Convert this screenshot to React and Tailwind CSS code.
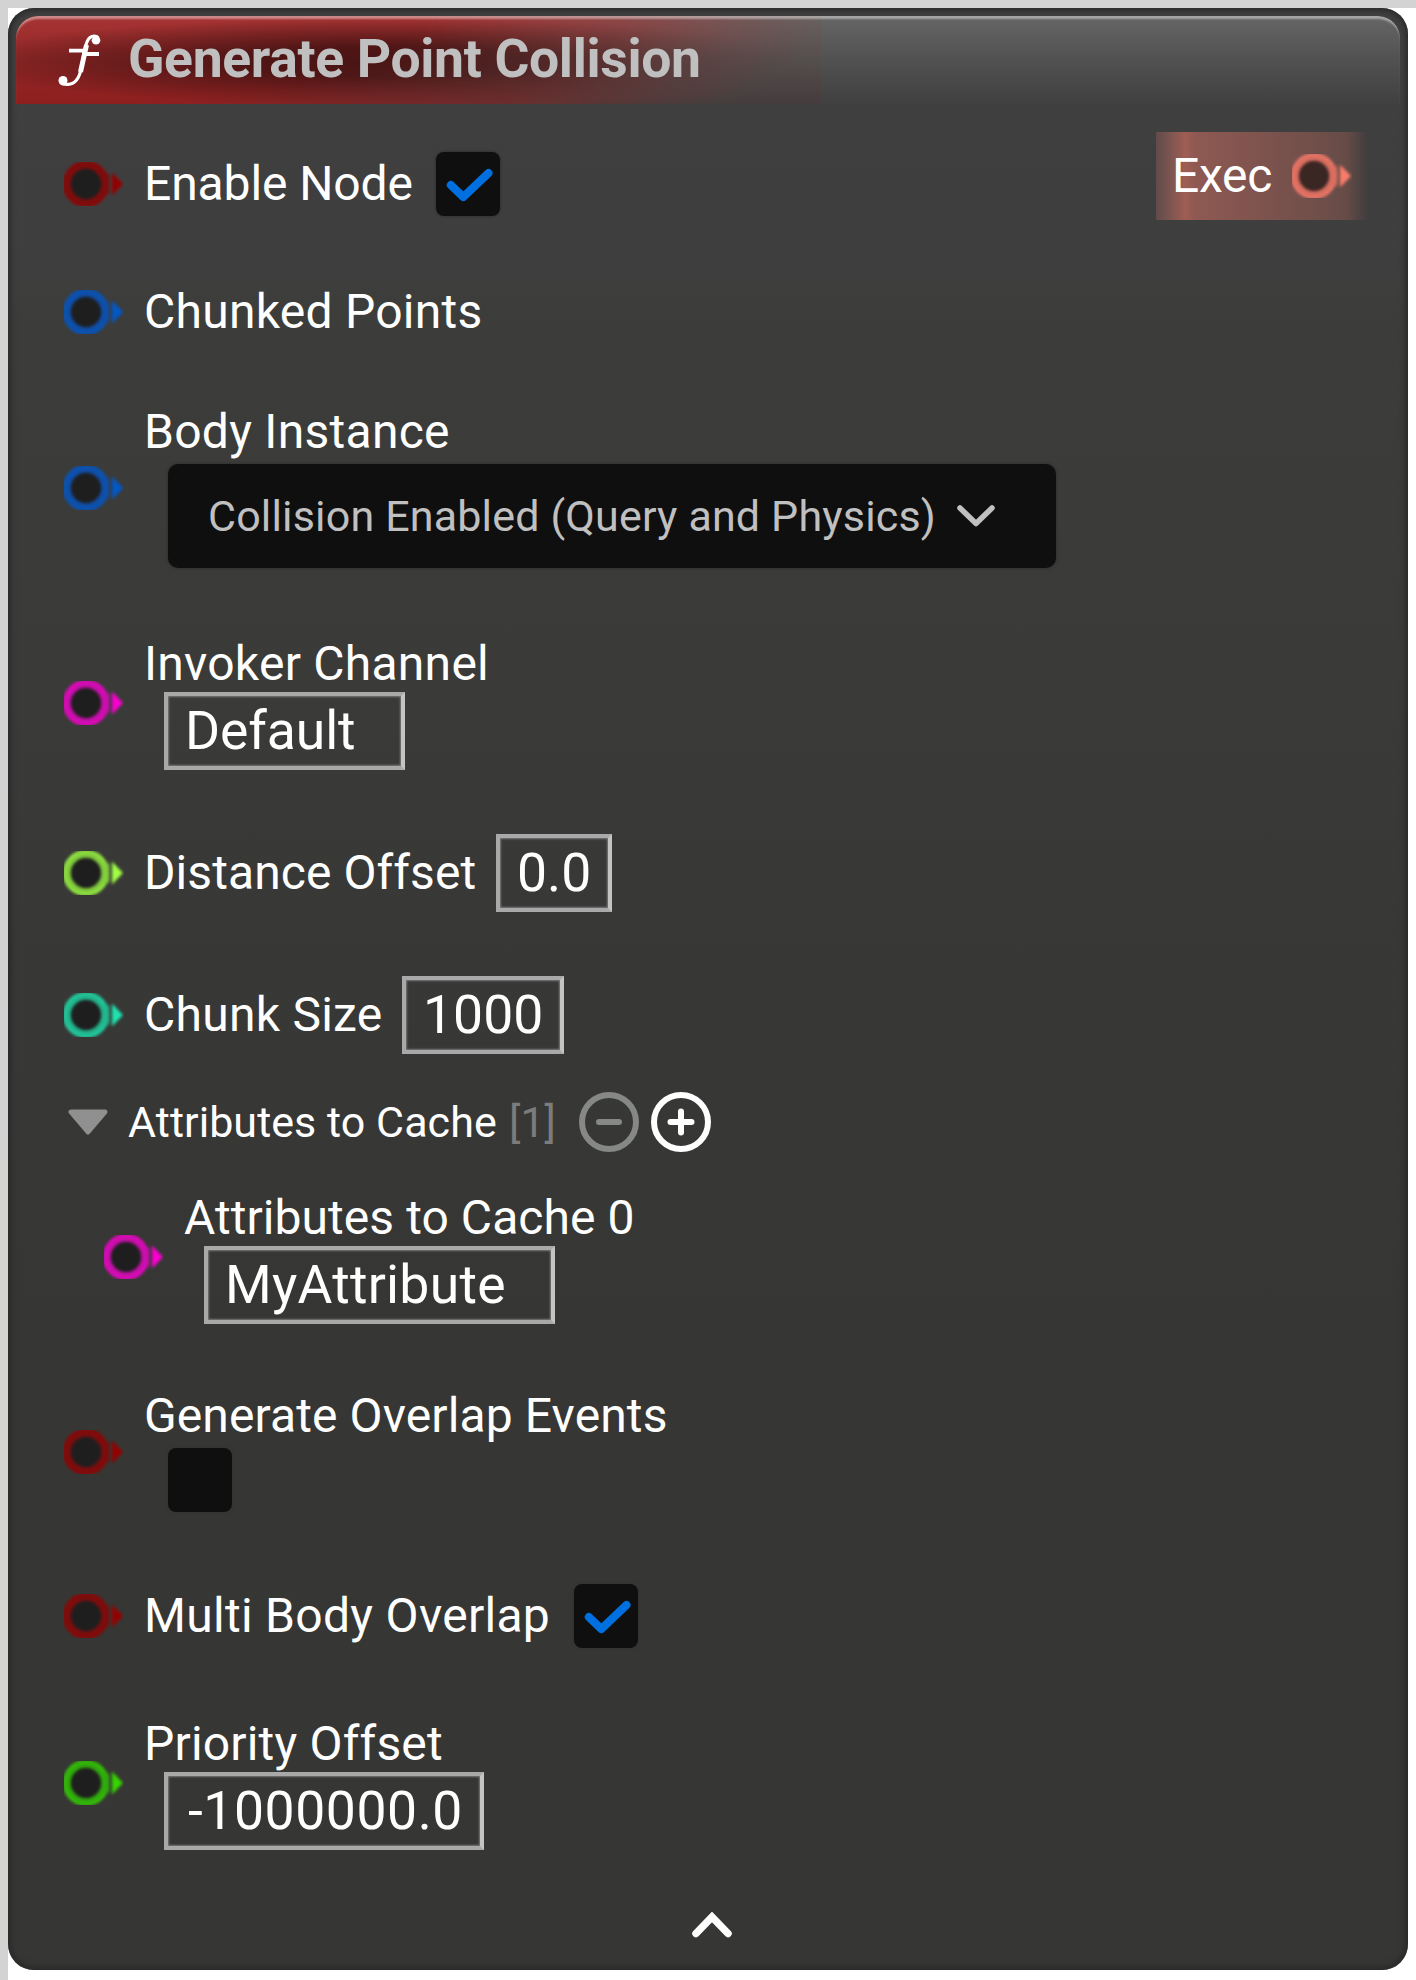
import React from "react";

function Pin({ color, ring, core = "#1e1e1e" }) {
  return (
    <svg width="60" height="44" viewBox="0 0 60 44" className="shrink-0 overflow-hidden">
      <g style={{ filter: "blur(1.4px)" }}>
        <circle cx="22" cy="22" r="19" fill={core} stroke={ring} strokeWidth="7.5" />
        <circle cx="22" cy="22" r="22" fill="none" stroke={color} strokeWidth="2" />
        <path d="M41 10 L45.500 13 V31 L41 34 Z" fill={ring} opacity="0.8" />
        <path d="M48 10.500 L59 22 L48 33.500 Z" fill={color} />
      </g>
    </svg>
  );
}

const PINS = {
  bool: ["#950000", "#7c0d0d"],
  struct: ["#0058cb", "#0f4fa8"],
  name: ["#fb00d0", "#c90fab"],
  float: ["#a1ff45", "#82cd3c"],
  int: ["#1fe3af", "#22b58d"],
  real: ["#35d400", "#30aa0c"],
};

function TypePin({ type }) {
  return <Pin color={PINS[type][0]} ring={PINS[type][1]} />;
}

function Label({ children, className = "" }) {
  return <div className={`h-14 text-[48px] leading-[56px] whitespace-nowrap text-white ${className}`}>{children}</div>;
}

function Row({ type, indent = "pl-12", children }) {
  return (
    <div className={`flex items-center gap-5 py-8 ${indent}`}>
      <TypePin type={type} />
      {children}
    </div>
  );
}

function Field({ className, children }) {
  return (
    <div
      className={`flex h-[78px] items-center border-4 border-[#a9a9a9] border-r-[#c4c4c4] text-[53.5px] leading-none whitespace-nowrap text-white shadow-[inset_0_0_2px_1px_#7a7a7a] ${className}`}
    >
      {children}
    </div>
  );
}

function Checkbox({ checked }) {
  return (
    <div className="flex size-16 items-center justify-center rounded-lg bg-[#0f0f0f] shadow-[0_0_2px_1px_#333333]">
      {checked && (
        <svg width="64" height="64" viewBox="0 0 64 64" fill="none">
          <path d="M14.800 33 L27.300 45 L52.500 21" stroke="#0070e0" strokeWidth="8" strokeLinecap="round" strokeLinejoin="round" />
        </svg>
      )}
    </div>
  );
}

function FunctionIcon() {
  return (
    <svg width="44" height="56" viewBox="0 0 44 56" className="shrink-0" fill="none">
      <path
        d="M40 5.500 C38 3.500 34.500 3.500 32 5.500 C29.500 7.500 28.300 11 27.500 15 L23 37 C21.500 45 18.500 52 10 52.300 C7 52.500 4 52 2.500 50.500"
        stroke="#fff"
        strokeWidth="3.200"
      />
      <path d="M28.500 13 L22.500 40" stroke="#fff" strokeWidth="5" />
      <circle cx="38" cy="8.300" r="4.300" fill="#fff" />
      <circle cx="5" cy="48.500" r="4.500" fill="#fff" />
      <path d="M11 18.700 H26 M24 22 H41" stroke="#fff" strokeWidth="3.800" />
    </svg>
  );
}

function Header() {
  return (
    <div className="relative h-[88px] overflow-hidden rounded-t-[22px] bg-linear-to-b from-[#666666] via-[#505150] to-[#404040]">
      <div className="absolute inset-y-0 left-0 w-[805px] bg-linear-to-b from-[#a83434] via-[#922626] to-[#8f1f1f] [mask-image:radial-gradient(805px_181px_at_0_0,#000_50%,rgba(0,0,0,0.62)_75%,rgba(0,0,0,0.25)_90%,rgba(0,0,0,0.07)_100%)]">
        <div className="size-full bg-[radial-gradient(430px_44px_at_370px_46px,#4a1414_0%,rgba(74,20,20,0.92)_35%,rgba(74,20,20,0.5)_65%,rgba(74,20,20,0)_100%)]" />
      </div>
      <div className="absolute inset-0 rounded-t-[22px] shadow-[inset_0_4px_2px_-1px_rgba(255,255,255,0.42)]" />
      <div className="relative flex h-full items-center pl-[42px]">
        <FunctionIcon />
        <h1 className="mb-0.5 ml-[26px] text-[53.5px] leading-none font-bold tracking-[-0.36px] whitespace-nowrap text-[#c0c0c0]">
          Generate Point Collision
        </h1>
      </div>
    </div>
  );
}

function ExecOutput() {
  return (
    <div className="mt-7 mr-8 flex h-[88px] w-[212px] items-center bg-[linear-gradient(90deg,#604c49_0%,#7a5450_6%,#9f5e54_14%,#8f5952_18%,#7e534e_50%,#6d4e49_80%,#654b47_90%,#3e3e3e_100%)] pl-4">
      <div className="w-[120px] text-[48px] leading-[56px] tracking-[-0.3px] text-white">Exec</div>
      <Pin color="#fb7c6c" ring="#d96e60" core="#3a2623" />
    </div>
  );
}

function ArrayHeader() {
  return (
    <div className="flex h-[72px] items-center pl-[52px]">
      <svg width="40" height="26" viewBox="0 0 40 26">
        <path d="M3 3 H37 L20 23 Z" fill="#909090" stroke="#909090" strokeWidth="5" strokeLinejoin="round" />
      </svg>
      <div className="ml-5 w-[381px] text-[43px] leading-[56px] tracking-[0.06px] whitespace-nowrap text-white">Attributes to Cache</div>
      <div className="w-[70px] text-[43px] leading-[56px] text-[#7c7c7c]">[1]</div>
      <svg width="60" height="60" viewBox="0 0 60 60" fill="none" stroke="#868886">
        <circle cx="30" cy="30" r="27" strokeWidth="6" />
        <path d="M20 30 H40" strokeWidth="6" strokeLinecap="round" />
      </svg>
      <svg width="60" height="60" viewBox="0 0 60 60" fill="none" stroke="#fff" className="ml-3">
        <circle cx="30" cy="30" r="27" strokeWidth="6" />
        <path d="M19.500 30 H40.500 M30 19.500 V40.500" strokeWidth="6" strokeLinecap="round" />
      </svg>
    </div>
  );
}

export default function App() {
  return (
    <div className="h-[1980px] w-[1416px] bg-white bg-[linear-gradient(#d3d3d3,#d3d3d3),linear-gradient(#d3d3d3,#d3d3d3)] bg-[size:100%_8px,8px_100%] bg-no-repeat pt-2 pl-2 font-['Roboto',sans-serif]">
      <div className="flex h-[1962px] w-[1400px] flex-col rounded-[26px] bg-[linear-gradient(180deg,#404040_0px,#3e3e3e_260px,#3c3d3a_320px,#3a3b39_700px,#383936_900px,#363734_1300px,#363734_100%)] p-2 shadow-[inset_0_0_6px_2px_#262626]">
        <Header />
        <div className="flex grow justify-between">
          <div className="flex flex-col pt-3">
            <Row type="bool">
              <Label className="w-[272px] tracking-[-0.1px]">Enable Node</Label>
              <div className="py-1">
                <Checkbox checked />
              </div>
            </Row>
            <Row type="struct">
              <Label className="tracking-[0.25px]">Chunked Points</Label>
            </Row>
            <Row type="struct">
              <div>
                <Label className="tracking-[0.28px]">Body Instance</Label>
                <div className="my-1 ml-6 flex h-[104px] w-[888px] items-center rounded-[10px] bg-[#0f0f0f] pl-10 text-[43px] text-[#c0c0c0] shadow-[0_0_2px_1px_#333333]">
                  <span className="w-[749px] tracking-[0.17px] whitespace-nowrap">Collision Enabled (Query and Physics)</span>
                  <svg width="38" height="22" viewBox="0 0 38 22" fill="none" className="shrink-0">
                    <path d="M3 3 L19 18.500 L35 3" stroke="#c0c0c0" strokeWidth="5.500" strokeLinecap="round" strokeLinejoin="round" />
                  </svg>
                </div>
              </div>
            </Row>
            <Row type="name">
              <div>
                <Label className="tracking-[0.25px]">Invoker Channel</Label>
                <Field className="ml-5 w-[241px] pl-[17px] tracking-[-0.1px]">Default</Field>
              </div>
            </Row>
            <Row type="float">
              <Label className="w-[332px] tracking-[0.08px]">Distance Offset</Label>
              <Field className="w-[116px] pl-[17px]">0.0</Field>
            </Row>
            <Row type="int">
              <Label className="w-[238px] tracking-[0.25px]">Chunk Size</Label>
              <Field className="w-[162px] pl-[17px]">1000</Field>
            </Row>
            <ArrayHeader />
            <Row type="name" indent="pl-[88px]">
              <div>
                <Label className="tracking-[0.06px]">Attributes to Cache 0</Label>
                <Field className="ml-5 w-[351px] pl-[17px] tracking-[0.25px]">MyAttribute</Field>
              </div>
            </Row>
            <Row type="bool">
              <div>
                <Label className="tracking-[0.11px]">Generate Overlap Events</Label>
                <div className="ml-6 py-1">
                  <Checkbox />
                </div>
              </div>
            </Row>
            <Row type="bool">
              <Label className="w-[410px] tracking-[0.3px]">Multi Body Overlap</Label>
              <div className="py-1">
                <Checkbox checked />
              </div>
            </Row>
            <Row type="real">
              <div>
                <Label className="tracking-[0.18px]">Priority Offset</Label>
                <Field className="ml-5 w-[320px] pl-5 tracking-[0.55px]">-1000000.0</Field>
              </div>
            </Row>
          </div>
          <div className="-ml-[212px]">
            <ExecOutput />
          </div>
        </div>
        <div className="flex justify-center pb-6 pl-2">
          <svg width="40" height="26" viewBox="0 0 40 26" fill="none">
            <path d="M4 21.500 L20 5 L36 21.500" stroke="#fff" strokeWidth="7.500" strokeLinecap="round" />
          </svg>
        </div>
      </div>
    </div>
  );
}
